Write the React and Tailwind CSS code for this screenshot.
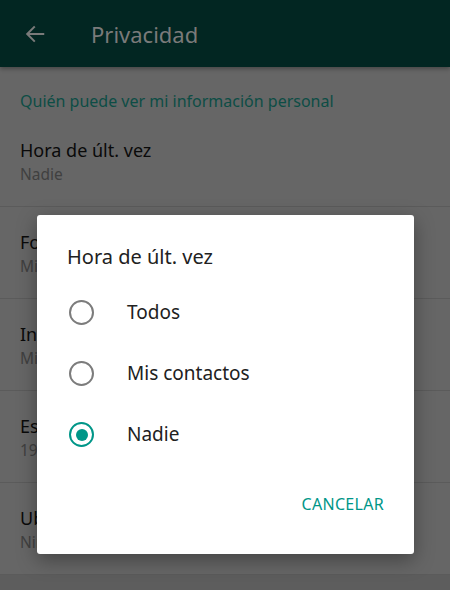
import React from "react";

const rows = [
  { t: "Hora de últ. vez", s: "Nadie" },
  { t: "Foto del perfil", s: "Mis contactos" },
  { t: "Info.", s: "Mis contactos" },
  { t: "Estado", s: "19 contactos seleccionados" },
  { t: "Ubicación en tiempo real", s: "Ninguno" },
];

function Radio({ checked }) {
  return checked ? (
    <span className="flex h-[25px] w-[25px] items-center justify-center rounded-full border-[2.5px] border-[#009688]">
      <span className="h-[12px] w-[12px] rounded-full bg-[#009688]" />
    </span>
  ) : (
    <span className="h-[25px] w-[25px] rounded-full border-[2.5px] border-[#7c7c7c]" />
  );
}

export default function App() {
  const font = { fontFamily: '"Noto Sans", "Open Sans", sans-serif' };
  return (
    <div className="relative h-[590px] w-[450px] overflow-hidden bg-[#666666]" style={font}>
      <div className="flex h-[67px] items-center bg-[#022622] shadow-[0_2px_4px_rgba(0,0,0,0.3)]">
        <svg className="ml-[24px] h-[22px] w-[22px]" viewBox="0 0 24 24" fill="none" stroke="#7a7a7a" strokeWidth="2.2" strokeLinecap="square">
          <path d="M21 12H4M11 4.5 3.5 12 11 19.5" />
        </svg>
        <span className="ml-[45px] text-[22px] leading-none text-[#7a7a7a]">Privacidad</span>
      </div>
      <div className="px-[20px] pt-[23px] pb-[3px] text-[16px] leading-[22px] text-[#0d4d45]">
        Quién puede ver mi información personal
      </div>
      <div className="flex flex-col">
        {rows.map((r, i) => (
          <div key={i} className="flex h-[92px] flex-col border-b border-[#5b5b5b] px-[20px] pt-[23px]">
            <span className="text-[18px] leading-[24px] text-[#0a0a0a]">{r.t}</span>
            <span className="text-[15.5px] leading-[24px] text-[#404040]">{r.s}</span>
          </div>
        ))}
      </div>
      <div className="h-full bg-[#5d5d5d]" />

      <div className="absolute left-[37px] top-[215px] flex h-[339px] w-[377px] flex-col rounded-[3px] bg-white shadow-[0_6px_20px_rgba(0,0,0,0.35)]">
        <div className="px-[30px] pt-[29px] text-[20px] leading-[26px] text-[#212121]">Hora de últ. vez</div>
        <div className="mt-[12px] flex flex-col">
          {["Todos", "Mis contactos", "Nadie"].map((o, i) => (
            <div key={o} className="flex h-[61px] items-center pl-[32px]">
              <Radio checked={i === 2} />
              <span className="ml-[33px] text-[19px] text-[#212121]">{o}</span>
            </div>
          ))}
        </div>
        <div className="mt-auto flex justify-end pb-[38px] pr-[30px]">
          <span className="text-[16px] tracking-[0.3px] text-[#009688]">CANCELAR</span>
        </div>
      </div>
    </div>
  );
}
